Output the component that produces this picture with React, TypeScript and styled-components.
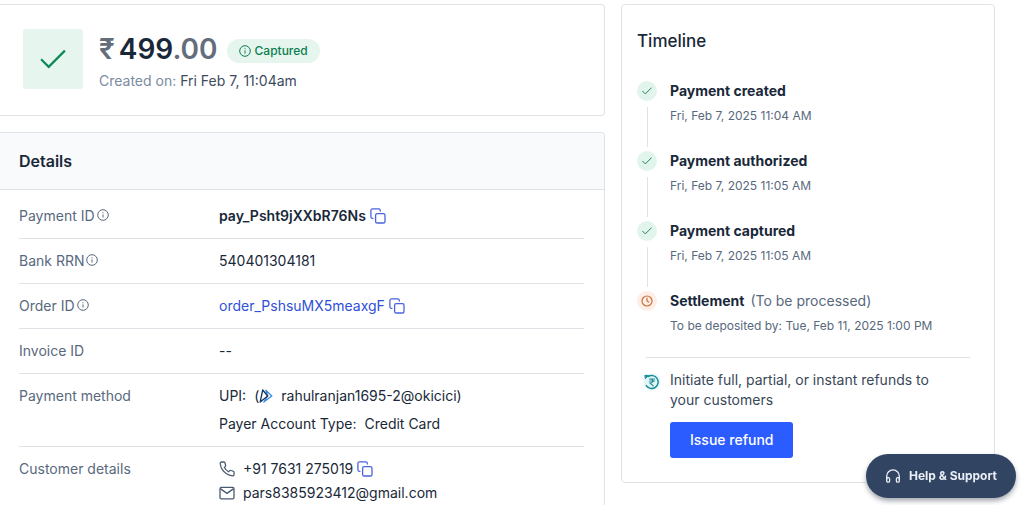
import React from "react";
import styled, { createGlobalStyle } from "styled-components";

const ink = "#192839";
const muted = "#58697d";
const line = "#dfe3e8";
const green = "#0a8a55";
const blue = "#2f50d8";

const GlobalStyle = createGlobalStyle`
  * { box-sizing: border-box; }
  body {
    margin: 0;
    background: #fff;
    color: ${ink};
    font-family: Inter, "Liberation Sans", sans-serif;
    font-size: 14px;
    line-height: 20px;
  }
  h1, h2, h3, p, dl, dd, ol { margin: 0; padding: 0; }
  button { font: inherit; cursor: pointer; }
`;

const Page = styled.div`
  display: grid;
  grid-template-columns: minmax(0, 1fr) 374px;
  align-items: start;
  gap: 16px;
  padding: 4px 33px 0 0;
`;

const Column = styled.main`
  display: flex;
  flex-direction: column;
  gap: 16px;
`;

const Card = styled.section`
  border: 1px solid ${line};
  border-left: none;
  border-radius: 0 4px 4px 0;
  background: #fff;
`;

const Summary = styled(Card)`
  display: flex;
  gap: 16px;
  padding: 24px 24px 24px 23px;
`;

const StatusTile = styled.div`
  display: grid;
  place-items: center;
  width: 60px;
  height: 60px;
  border-radius: 3px;
  background: #e6f6ef;
  color: ${green};
`;

const AmountRow = styled.div`
  display: flex;
  align-items: center;
  gap: 9px;
  padding-top: 2px;
`;

const Amount = styled.h1`
  display: flex;
  gap: 4px;
  font-size: 28px;
  line-height: 36px;
  font-weight: 600;
`;

const Soft = styled.span`
  color: #646d7c;
`;

const Badge = styled.span`
  display: inline-flex;
  align-items: center;
  gap: 4px;
  height: 24px;
  margin-top: 4px;
  padding: 0 12px;
  border-radius: 12px;
  background: #e6f6ef;
  color: #0b7d4e;
  font-size: 12px;
  font-weight: 500;
`;

const Created = styled.p`
  margin-top: 4px;
  color: #3d4b5e;
`;

const CreatedLabel = styled.span`
  color: #7b8ba0;
`;

const CardHeader = styled.header`
  padding: 16px 20px 16px 19px;
  border-bottom: 1px solid ${line};
  border-radius: 0 4px 0 0;
  background: #f9fafc;
`;

const CardTitle = styled.h2`
  font-size: 16px;
  line-height: 24px;
  font-weight: 600;
`;

const TimelineTitle = styled(CardTitle)`
  font-size: 17px;
  font-weight: 500;
`;

const Rows = styled.dl`
  padding: 4px 20px 4px 19px;
`;

const Row = styled.div`
  display: grid;
  grid-template-columns: 200px minmax(0, 1fr);
  padding: 12px 0;
  border-bottom: 1px solid ${line};
  &:last-child { border-bottom: none; }
`;

const Label = styled.dt`
  display: flex;
  align-items: center;
  gap: 2px;
  color: ${muted};
  svg { margin-bottom: 2px; }
`;

const LabelTop = styled(Label)`
  align-items: flex-start;
`;

const Value = styled.dd`
  display: flex;
  flex-direction: column;
  gap: ${({ $gap = 0 }: { $gap?: number }) => $gap}px;
`;

const Line = styled.div`
  display: flex;
  align-items: center;
  gap: ${({ $gap = 4 }: { $gap?: number }) => $gap}px;
`;

const Strong = styled.span`
  font-weight: 600;
`;

const OrderLink = styled.a`
  color: ${blue};
  text-decoration: none;
`;

const IconButton = styled.button`
  display: inline-flex;
  padding: 0;
  border: none;
  background: none;
  color: #4a63e0;
`;

const TimelineCard = styled.aside`
  padding: 24px 24px 24px 15px;
  border: 1px solid ${line};
  border-radius: 4px;
`;

const Steps = styled.ol`
  margin-top: 28px;
  list-style: none;
`;

const Step = styled.li`
  display: grid;
  grid-template-columns: 20px minmax(0, 1fr);
  column-gap: 13px;
  min-height: 70px;
  &:last-child { min-height: 45px; }
`;

const Rail = styled.div`
  display: flex;
  flex-direction: column;
  align-items: center;
  gap: 6px;
  padding-bottom: 4px;
`;

const Marker = styled.span<{ $pending?: boolean }>`
  display: grid;
  place-items: center;
  width: 20px;
  height: 20px;
  border-radius: 50%;
  background: ${(p) => (p.$pending ? "#fdeee6" : "#e2f5ec")};
  color: ${(p) => (p.$pending ? "#c8713f" : "#23805a")};
`;

const Connector = styled.span`
  flex: 1;
  width: 1px;
  background: ${line};
`;

const StepTitle = styled.h3`
  font-size: 14px;
  line-height: 20px;
  font-weight: 700;
`;

const StepNote = styled.span`
  margin-left: 6px;
  color: ${muted};
  font-weight: 400;
`;

const StepTime = styled.p`
  margin-top: 5px;
  color: ${muted};
  font-size: 12px;
`;

const Refund = styled.div`
  display: grid;
  grid-template-columns: 18px minmax(0, 1fr);
  column-gap: 6px;
  margin: 21px 0 0 9px;
  padding-top: 12px;
  border-top: 1px solid ${line};
`;

const RefundIconSlot = styled.div`
  padding-top: 3px;
  margin: 0 3px 0 -3px;
`;

const RefundBody = styled.div`
  display: flex;
  flex-direction: column;
  align-items: flex-start;
  gap: 12px;
`;

const RefundText = styled.p`
  max-width: 280px;
  color: #3a4859;
`;

const PrimaryButton = styled.button`
  height: 36px;
  padding: 0 20px;
  border: none;
  border-radius: 3px;
  background: #2b5cff;
  color: #fff;
  font-weight: 500;
`;

const HelpButton = styled.button`
  position: fixed;
  right: 12px;
  bottom: 7px;
  display: flex;
  align-items: center;
  gap: 8px;
  height: 44px;
  padding: 0 19px;
  border: none;
  border-radius: 22px;
  background: #314563;
  box-shadow: 0 3px 5px rgba(30, 40, 60, 0.4);
  color: #e9eef7;
  font-size: 12px;
  font-weight: 700;
`;

const InfoIcon = () => (
  <svg width="12" height="12" viewBox="0 0 12 12" fill="none" stroke="currentColor" strokeWidth="1" aria-hidden="true">
    <circle cx="6" cy="6" r="5.3" />
    <path d="M6 5.4v3.1M6 3.3v1" />
  </svg>
);

const CheckIcon = ({ width, stroke }: { width: number; stroke: number }) => (
  <svg width={width} height={(width * 3) / 4} viewBox="0 0 24 18" fill="none" stroke="currentColor" strokeWidth={stroke} aria-hidden="true">
    <path d="M1 9.5 8 16.5 23 1.5" />
  </svg>
);

const CopyIcon = () => (
  <svg width="16" height="16" viewBox="0 0 16 16" fill="none" stroke="currentColor" strokeWidth="1.3" strokeLinecap="round" strokeLinejoin="round" aria-hidden="true">
    <rect x="5.6" y="5.6" width="9.4" height="9.4" rx="1.6" />
    <path d="M3 10.3H2.4A1.5 1.5 0 0 1 .9 8.8V2.4A1.5 1.5 0 0 1 2.4.9h6.4a1.5 1.5 0 0 1 1.5 1.5V3" />
  </svg>
);

const ClockIcon = () => (
  <svg width="12" height="12" viewBox="0 0 12 12" fill="none" stroke="currentColor" strokeWidth="1.2" strokeLinecap="round" aria-hidden="true">
    <circle cx="6" cy="6" r="5" />
    <path d="M6 3.2V6l1.7 1" />
  </svg>
);

const UpiIcon = () => (
  <svg width="14" height="14" viewBox="0 0 14 14" fill="none" strokeWidth="1.3" strokeLinejoin="round" aria-hidden="true">
    <path d="M6.800 1.300 12.800 7 4.800 13 8.700 7z" stroke="#3a8be0" />
    <path d="M3.700 1 8.700 7 1.200 13z" stroke="#1c3358" />
  </svg>
);

const PhoneIcon = () => (
  <svg width="16" height="16" viewBox="0 0 24 24" fill="none" stroke="#4a5b70" strokeWidth="1.9" strokeLinecap="round" strokeLinejoin="round" aria-hidden="true">
    <path d="M22.6 17.2v3.1a2.1 2.1 0 0 1-2.3 2.1 20.8 20.8 0 0 1-9-3.2 20.5 20.5 0 0 1-6.3-6.3 20.8 20.8 0 0 1-3.2-9.1A2.1 2.1 0 0 1 3.9 1.500H7a2.1 2.1 0 0 1 2.1 1.8c.13 1 .38 2 .73 2.95a2.1 2.1 0 0 1-.47 2.2L8 9.8a16.8 16.8 0 0 0 6.300 6.300l1.340-1.340a2.1 2.1 0 0 1 2.200-.47c.95.35 1.950.6 2.950.73a2.1 2.1 0 0 1 1.800 2.180z" />
  </svg>
);

const MailIcon = () => (
  <svg width="16" height="16" viewBox="0 0 16 16" fill="none" stroke="#4a5b70" strokeWidth="1.3" strokeLinejoin="round" aria-hidden="true">
    <rect x="1" y="2.4" width="14" height="11.4" rx="1.3" />
    <path d="m1.300 3.600 6.700 4.800 6.700-4.800" />
  </svg>
);

const RefundIcon = () => (
  <svg width="18" height="18" viewBox="0 0 18 18" fill="none" stroke="#168a96" strokeLinecap="round" aria-hidden="true">
    <circle cx="9" cy="9" r="8.5" fill="#e3f6f6" stroke="none" />
    <path d="M5 3.600A6.500 6.500 0 1 1 3.300 12.600" strokeWidth="1.4" />
    <path d="M2.200 2.400h3.200L2.600 5.400z" fill="#168a96" strokeWidth="1" strokeLinejoin="round" />
    <path d="M6.600 6h5M6.600 8h5M6.800 6c4.200 0 4.200 4 .2 4l3.200 2.800" strokeWidth="1.1" />
  </svg>
);

const HeadsetIcon = () => (
  <svg width="16" height="16" viewBox="0 0 16 16" fill="none" stroke="currentColor" strokeWidth="1.3" strokeLinejoin="round" aria-hidden="true">
    <path d="M1.700 11.800V8.200a6.300 6.300 0 0 1 12.600 0v3.600" />
    <path d="M1.700 9.600h1.600a1.300 1.300 0 0 1 1.300 1.300v2a1.300 1.300 0 0 1-1.300 1.300H3a1.300 1.300 0 0 1-1.300-1.300zM14.300 9.600h-1.600a1.300 1.300 0 0 0-1.300 1.300v2a1.300 1.300 0 0 0 1.300 1.300h.3a1.300 1.300 0 0 0 1.300-1.300z" />
  </svg>
);

const Copy = ({ label }: { label: string }) => (
  <IconButton type="button" aria-label={label}>
    <CopyIcon />
  </IconButton>
);

const doneSteps = [
  { title: "Payment created", time: "Fri, Feb 7, 2025 11:04 AM" },
  { title: "Payment authorized", time: "Fri, Feb 7, 2025 11:05 AM" },
  { title: "Payment captured", time: "Fri, Feb 7, 2025 11:05 AM" },
];

export default function App() {
  return (
    <>
      <GlobalStyle />
      <Page>
        <Column>
          <Summary>
            <StatusTile>
              <CheckIcon width={26} stroke={2} />
            </StatusTile>
            <div>
              <AmountRow>
                <Amount>
                  <Soft>₹</Soft>
                  <span>499<Soft>.00</Soft></span>
                </Amount>
                <Badge>
                  <InfoIcon />
                  Captured
                </Badge>
              </AmountRow>
              <Created>
                <CreatedLabel>Created on:</CreatedLabel> Fri Feb 7, 11:04am
              </Created>
            </div>
          </Summary>

          <Card>
            <CardHeader>
              <CardTitle>Details</CardTitle>
            </CardHeader>
            <Rows>
              <Row>
                <Label>Payment ID<InfoIcon /></Label>
                <Value>
                  <Line>
                    <Strong>pay_Psht9jXXbR76Ns</Strong>
                    <Copy label="Copy payment ID" />
                  </Line>
                </Value>
              </Row>
              <Row>
                <Label>Bank RRN<InfoIcon /></Label>
                <Value>540401304181</Value>
              </Row>
              <Row>
                <Label>Order ID<InfoIcon /></Label>
                <Value>
                  <Line>
                    <OrderLink href="#order">order_PshsuMX5meaxgF</OrderLink>
                    <Copy label="Copy order ID" />
                  </Line>
                </Value>
              </Row>
              <Row>
                <Label>Invoice ID</Label>
                <Value>--</Value>
              </Row>
              <Row>
                <LabelTop>Payment method</LabelTop>
                <Value $gap={8}>
                  <Line $gap={8}>
                    <span>UPI:</span>
                    <Line $gap={0}>
                      (<UpiIcon />
                    </Line>
                    <span>rahulranjan1695-2@okicici)</span>
                  </Line>
                  <Line $gap={8}>
                    <span>Payer Account Type:</span>
                    <span>Credit Card</span>
                  </Line>
                </Value>
              </Row>
              <Row>
                <LabelTop>Customer details</LabelTop>
                <Value $gap={4}>
                  <Line $gap={8}>
                    <PhoneIcon />
                    <Line>
                      +91 7631 275019
                      <Copy label="Copy phone number" />
                    </Line>
                  </Line>
                  <Line $gap={8}>
                    <MailIcon />
                    pars8385923412@gmail.com
                  </Line>
                </Value>
              </Row>
            </Rows>
          </Card>
        </Column>

        <TimelineCard>
          <TimelineTitle>Timeline</TimelineTitle>
          <Steps>
            {doneSteps.map((step) => (
              <Step key={step.title}>
                <Rail>
                  <Marker>
                    <CheckIcon width={10} stroke={2.4} />
                  </Marker>
                  <Connector />
                </Rail>
                <div>
                  <StepTitle>{step.title}</StepTitle>
                  <StepTime>{step.time}</StepTime>
                </div>
              </Step>
            ))}
            <Step>
              <Rail>
                <Marker $pending>
                  <ClockIcon />
                </Marker>
              </Rail>
              <div>
                <StepTitle>
                  Settlement<StepNote>(To be processed)</StepNote>
                </StepTitle>
                <StepTime>To be deposited by: Tue, Feb 11, 2025 1:00 PM</StepTime>
              </div>
            </Step>
          </Steps>
          <Refund>
            <RefundIconSlot>
              <RefundIcon />
            </RefundIconSlot>
            <RefundBody>
              <RefundText>Initiate full, partial, or instant refunds to your customers</RefundText>
              <PrimaryButton type="button">Issue refund</PrimaryButton>
            </RefundBody>
          </Refund>
        </TimelineCard>
      </Page>
      <HelpButton type="button">
        <HeadsetIcon />
        Help &amp; Support
      </HelpButton>
    </>
  );
}
